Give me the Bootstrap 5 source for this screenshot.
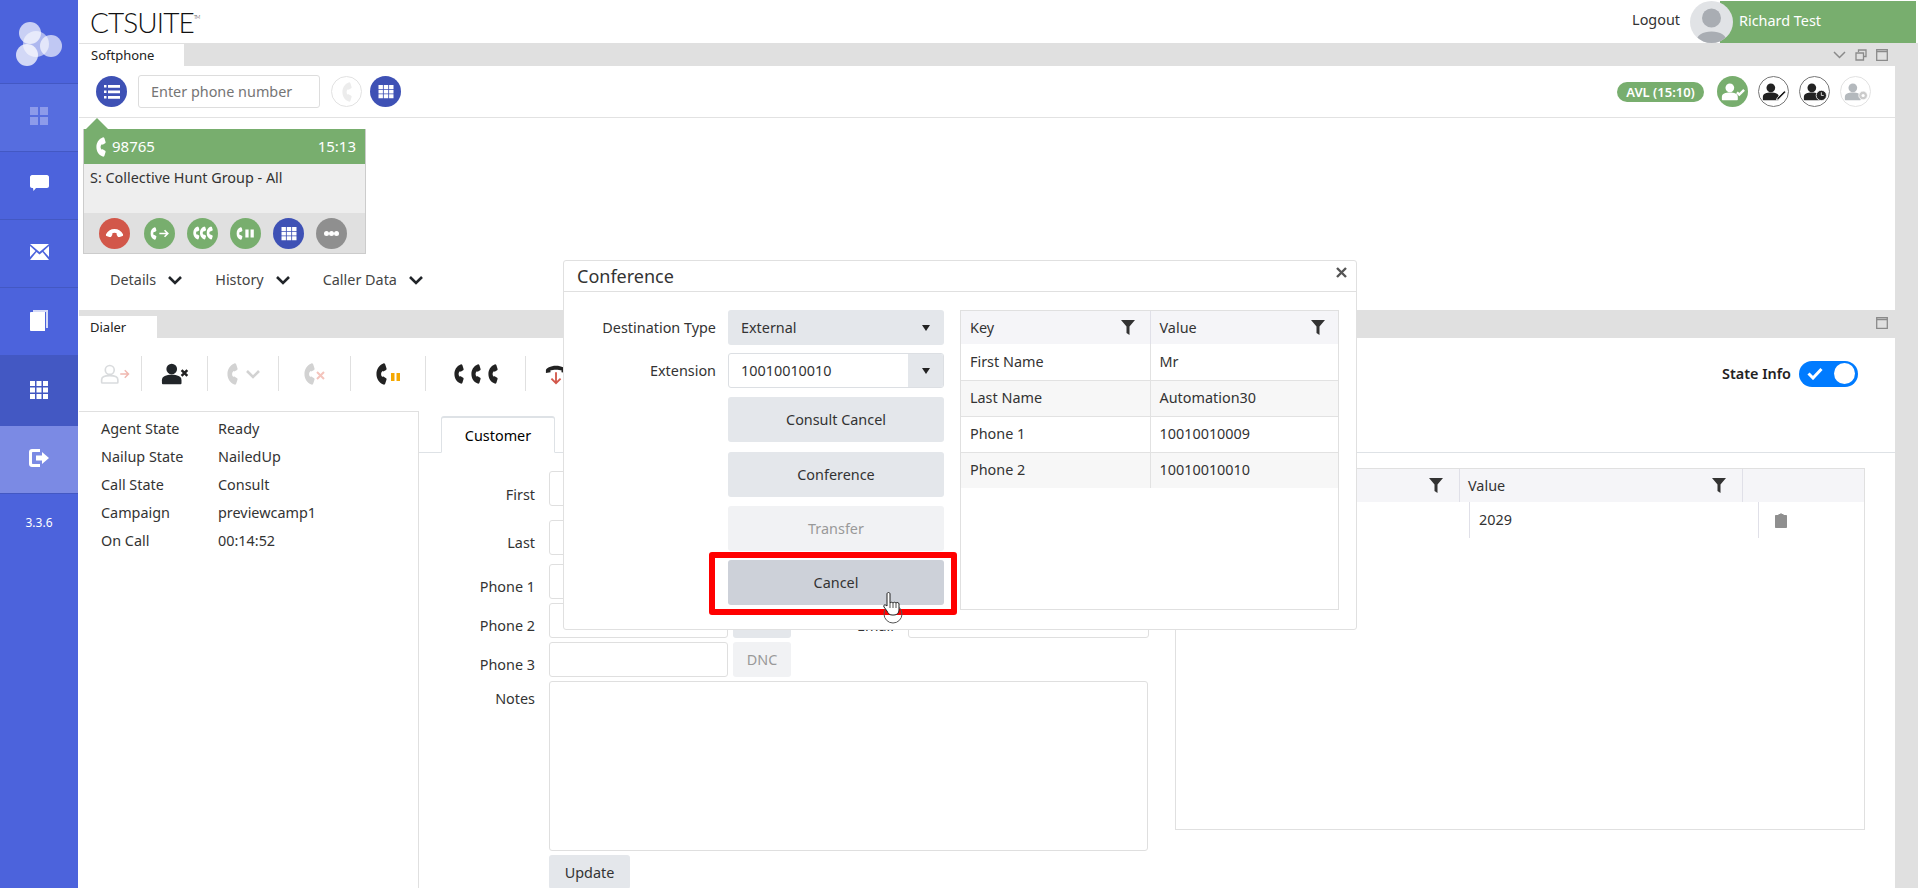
<!DOCTYPE html>
<html lang="en">
<head>
    <meta charset="UTF-8">
    <title>CTSUITE Softphone</title>
    <link href="https://cdn.jsdelivr.net/npm/bootstrap@5.3.0/dist/css/bootstrap.min.css" rel="stylesheet">
    <style>
        html, body { height: 888px; overflow: hidden; }
        body { font-family: "Noto Sans", sans-serif; font-size: 14.4px; color: #333; background: #fff; }

        /* left rail */
        .side-rail { width: 78px; height: 888px; background: #4c63dc; flex-shrink: 0; color: #fff; }
        .rail-logo { height: 84px; border-bottom: 1px solid #4358c3; padding-top: 5px; }
        .rail-item { height: 68px; border-bottom: 1px solid #4358c3; padding-bottom: 3px; }
        .rail-item.dim { background: #566ddf; }
        .rail-item.dark { background: #4358c3; height: 70px; border: 0; }
        .rail-item.light { background: #7b8ae4; height: 68px; }
        .rail-version { font-size: 12px; margin-top: 20px; }

        .app-main { width: 1840px; }
        .top-strip { height: 43px; }
        .brand-text { font-family: "Lato", sans-serif; font-weight: 300; font-size: 28px; color: #111; margin-left: 12px; letter-spacing: -.9px; line-height: 46px; }
        .brand-text sup { font-size: 5px; top: -14px; }
        .logout-link { color: #333; margin-right: 10px; margin-top: -4px; }
        .user-chip { width: 226px; height: 42px; margin-right: 2px; align-self: flex-start; }
        .user-photo { width: 43px; height: 42px; background: #e1e3e6; z-index: 1; }
        .user-name { background: #78ae6e; color: #fff; margin-left: -13px; padding-left: 19px; flex: 1; line-height: 40px; }

        /* window bars */
        .win-bar { background: #e0e0e0; margin-left: 1px; }
        .win-bar.soft { height: 23px; }
        .win-bar.dial { height: 28px; margin-top: 1px; }
        .win-tab { background: #fff; color: #222; font-size: 13px; padding-left: 12px; height: 22px; line-height: 22px; }
        .win-bar.soft .win-tab { width: 105px; margin-top: 1px; }
        .win-bar.dial .win-tab { width: 78px; height: 22px; margin-top: 6px; padding-left: 11px; }
        .win-ctrls { padding-right: 30px; gap: 9px; color: #8a8a8a; }
        .win-bar.dial .win-ctrls { padding-top: 7px; height: 28px; }

        .win-body { margin-right: 23px; margin-left: 1px; background: #fff; }
        .gutter { background: #e0e0e0; height: 845px; width: 23px; position: absolute; top: 43px; right: 0; }

        /* softphone */
        .soft-tools { height: 52px; border-bottom: 1px solid #e2e2e2; padding-left: 17px; padding-right: 24px; }
        .round-btn { width: 31px; height: 31px; flex-shrink: 0; }
        .round-btn.blue { background: #3e51b5; color: #fff; }
        .round-btn.green { background: #78ae6e; color: #fff; }
        .round-btn.red { background: #d2574a; color: #fff; }
        .round-btn.grey { background: #8f8f8f; color: #fff; }
        .round-btn.ghost { background: #fff; border: 1px solid #e2e2e2; color: #ececec; }
        .round-btn.ring { background: #fff; border: 1px solid #777; color: #222; }
        .status-btn { margin-left: 10px; }
        .phone-input.form-control { width: 182px; height: 33px; font-size: 14.4px; color: #666; border-color: #ddd; border-radius: 3px; padding: 0 12px; margin: 0 11px 0 11px; }
        .phone-input::placeholder { color: #757575; }
        .state-pill { background: #78ae6e; color: #fff; font-weight: 600; font-size: 13px; width: 87px; height: 20px; line-height: 20px; margin-right: 3px; }

        .call-zone { height: 191px; padding-left: 4px; }
        .call-tip { width: 0; height: 0; border-left: 11px solid transparent; border-right: 11px solid transparent; border-bottom: 11px solid #78ae6e; margin-left: 3px; }
        .call-card { width: 283px; border: 1px solid #ccc; border-width: 0 1px 1px; }
        .call-head { height: 35px; background: #78ae6e; color: #fff; font-size: 15px; padding: 0 9px 0 12px; gap: 6px; }
        .call-info { height: 49px; background: #eee; padding: 3px 6px; color: #333; }
        .call-actions { height: 40px; background: #e0e0e0; padding-left: 15px; }
        .call-actions .round-btn + .round-btn { margin-left: 12px; }
        .call-actions .red + .round-btn { margin-left: 14px; }
        .hang-turn { transform: rotate(90deg); }
        .drop-row { padding-left: 27px; padding-top: 15px; color: #444; }
        .drop-item { margin-right: 33px; }

        /* dialer */
        .dial-tools { height: 73px; padding-top: 18px; }
        .tool-cell { height: 35px; border-right: 1px solid #e0e0e0; }
        .cell-a { width: 63px; padding-right: 11px; }
        .cell-b { width: 66px; }
        .cell-c { width: 71px; color: #d2d2d2; }
        .cell-d { width: 72px; color: #d2d2d2; }
        .cell-e { width: 75px; color: #222; }
        .cell-f { width: 100px; color: #222; gap: 7px; }
        .cell-g { height: 35px; color: #222; padding-left: 19px; }
        .toggle-wrap { height: 35px; padding-right: 37px; }
        .state-toggle { width: 59px; height: 26px; background: #007bff; padding: 0 3px 0 8px; margin-left: 8px; }
        .toggle-dot { width: 21px; height: 21px; background: #fff; }
        .state-label { font-weight: 600; color: #222; font-size: 14.4px; }
        .dial-split { height: 477px; }
        .state-panel { width: 340px; border-top: 1px solid #e0e0e0; border-right: 1px solid #e0e0e0; padding: 3px 0 0 22px; }
        .state-panel .table { width: auto; margin: 0; --bs-table-bg: transparent; }
        .state-panel td { padding: 0; height: 28px; vertical-align: middle; border: 0; color: #333; }
        .state-panel td:first-child { width: 117px; }

        .tab-strip { padding-top: 5px; padding-left: 22px; border-bottom: 1px solid #dee2e6; height: 42px; }
        .tab-strip .nav-link { width: 114px; height: 37px; padding: 7px 0 0; text-align: center; color: #333; border: 1px solid #dee2e6; border-top: 2px solid #007bff; border-bottom-color: #fff; border-radius: 3px 3px 0 0; }
        .cust-form { width: 731px; padding-top: 18px; }
        .cust-row { display: flex; margin-bottom: 4px; }
        .cust-row.wide { margin-bottom: 14px; }
        .cust-row.mid { margin-bottom: 9px; }
        .cust-label { width: 116px; text-align: right; padding-top: 12px; color: #333; margin-right: 14px; }
        .cust-row.wide .cust-label { padding-top: 13px; }
        .cust-label.top-tight { padding-top: 7px; }
        .cust-input.form-control { width: 179px; height: 35px; border-color: #dfdfdf; border-radius: 3px; }
        .dnc-btn.btn { width: 58px; height: 35px; margin-left: 5px; padding: 0; font-size: 14.4px; background: #e4e7eb; border: 0; color: #333; border-radius: 3px; }
        .dnc-btn.btn:disabled { background: #f1f2f4; color: #999; opacity: 1; }
        .mail-label { width: 103px; text-align: right; margin-right: 14px; padding-top: 12px; }
        .mail-input.form-control { width: 241px; height: 35px; border-color: #dfdfdf; border-radius: 3px; }
        .notes-box.form-control { width: 599px; height: 170px; border-color: #dfdfdf; border-radius: 3px; resize: none; }
        .update-btn.btn { width: 81px; height: 34px; margin-left: 130px; padding: 2px 0 0; font-size: 14.4px; background: #e4e7eb; border: 0; color: #333; border-radius: 3px; }
        .data-box { width: 690px; height: 362px; border: 1px solid #e0e0e0; margin: 15px 0 0 25px; }
        .data-head { height: 33px; background: #f5f5f8; }
        .data-head > div { border-right: 1px solid #e0e0e8; padding: 0 8px; }
        .data-line { height: 36px; }
        .data-line > div { border-right: 1px solid #e0e0e8; padding-left: 9px; }
        .head-key { width: 284px; }
        .head-val { width: 283px; }
        .line-key { width: 294px; }
        .line-val { width: 289px; }

        /* conference dialog */
        .conf-dialog { position: absolute; left: 563px; top: 260px; width: 794px; height: 370px; background: #fff; border: 1px solid #e0e0e0; border-radius: 3px; z-index: 10; }
        .conf-title { height: 31px; border-bottom: 1px solid #e0e0e0; font-size: 18px; padding-left: 13px; color: #333; line-height: 31px; }
        .conf-close { width: 11px; height: 11px; color: #555; margin: 6px 9px 0 0; }
        .conf-left { width: 380px; padding-top: 18px; }
        .conf-field { height: 35px; margin-bottom: 8px; }
        .conf-field + .conf-field { margin-bottom: 9px; }
        .conf-label { width: 152px; text-align: right; margin-right: 12px; color: #333; }
        .conf-select { width: 216px; height: 35px; background: #e4e7eb; border-radius: 3px; padding-left: 13px; color: #333; }
        .conf-combo { width: 216px; height: 35px; border: 1px solid #dcdfe3; border-radius: 3px; overflow: hidden; }
        .combo-arrow { width: 35px; background: #e4e7eb; }
        .caret-down { width: 0; height: 0; border-left: 4.5px solid transparent; border-right: 4.5px solid transparent; border-top: 6px solid #222; }
        .conf-select .caret-down { margin-right: 14px; }
        .conf-btn.btn { display: block; width: 216px; height: 45px; margin: 0 0 9px 164px; padding: 0; font-size: 14.4px; border: 0; border-radius: 3px; background: #e4e7eb; color: #333; }
        .conf-btn.btn.first-btn { margin-bottom: 10px; }
        .conf-btn.btn:disabled { background: #f1f2f4; color: #999; opacity: 1; }
        .conf-btn.btn.picked { background: #cdd1d9; }
        .conf-table { width: 379px; height: 300px; border: 1px solid #e0e0e0; margin: 18px 0 0 16px; }
        .conf-table .table { margin: 0; --bs-table-bg: transparent; table-layout: fixed; }
        .conf-table th { height: 33px; font-weight: 400; background: #f5f5f8; padding: 0 9px; vertical-align: middle; border: 0; border-right: 1px solid #e0e0e8; color: #333; }
        .conf-table th:first-child { width: 189px; padding-right: 11px; }
        .conf-table td { height: 36px; padding: 0 9px; vertical-align: middle; border: 0; border-right: 1px solid #e2e2e2; border-bottom: 1px solid #e2e2e2; color: #333; box-shadow: none; }
        .conf-table tbody tr:nth-child(even) td { background: #f7f7f7; }
        .conf-table tr:last-child td { border-bottom: 0; }
        .conf-table th:last-child, .conf-table td:last-child { border-right: 0; }

        .red-mark { position: absolute; left: 709px; top: 552px; width: 248px; height: 63px; border: 6px solid #f00; border-radius: 3px; z-index: 11; }
        .hand-cursor { position: absolute; left: 881px; top: 591px; z-index: 12; }
    </style>
</head>
<body class="d-flex">

<svg class="d-none">
    <symbol id="i-phone" viewBox="0 0 12 24"><path fill="currentColor" d="M8 .5C3 2.500.5 7 .5 12S3 21.500 8 23.500c1 .3 1.500 0 2-.8l1.500-4.700c.2-.7 0-1.200-.5-1.500L8.500 15c-.6-.3-1.100-.2-1.500.3-2-1.800-2-4.800 0-6.600.4.500.9.600 1.500.3L11 7.500c.5-.3.700-.8.500-1.500L10 1.300C9.500.5 9 .2 8 .5z"/></symbol>
    <symbol id="i-grid" viewBox="0 0 16 16"><path fill="currentColor" d="M0 1h4.700v4.300H0zM5.600 1h4.800v4.300H5.600zM11.300 1H16v4.300h-4.700zM0 6h4.700v4.200H0zM5.600 6h4.800v4.200H5.600zM11.300 6H16v4.200h-4.700zM0 11h4.700v4.200H0zM5.600 11h4.800v4.200H5.600zM11.300 11H16v4.200h-4.700z"/></symbol>
    <symbol id="i-list" viewBox="0 0 16 14"><path fill="currentColor" d="M0 0h2.500v2.500H0zM4 0h12v2.800H4zM0 5.500h2.500V8H0zM4 5.500h12v2.800H4zM0 11h2.500v2.500H0zM4 11h12v2.800H4z"/></symbol>
    <symbol id="i-user" viewBox="0 0 24 24"><circle cx="12" cy="7" r="6" fill="currentColor"/><path fill="currentColor" d="M1 23v-3.500C1 15 6 13.500 12 13.500S23 15 23 19.500V23c0 .6-.4 1-1 1H2c-.6 0-1-.4-1-1z"/></symbol>
    <symbol id="i-user-line" viewBox="0 0 24 24"><circle cx="12" cy="7" r="5.500" fill="none" stroke="currentColor" stroke-width="2"/><path fill="none" stroke="currentColor" stroke-width="2" d="M2 22v-3c0-3.500 4.500-5 10-5s10 1.500 10 5v3c0 .6-.4 1-1 1H3c-.6 0-1-.4-1-1z"/></symbol>
    <symbol id="i-filter" viewBox="0 0 14 15"><path fill="#333" d="M0 0h14L8.500 6.500V15L5.500 13V6.500z"/></symbol>
    <symbol id="i-chev" viewBox="0 0 14 10"><path fill="none" stroke="currentColor" stroke-width="2.600" d="M1 2l6 6 6-6"/></symbol>
</svg>

<aside class="side-rail d-flex flex-column align-items-center">
    <div class="rail-logo w-100 d-flex align-items-center justify-content-center">
        <svg width="48" height="48" viewBox="0 0 48 48" fill="#fff"><circle cx="15" cy="13" r="11" opacity=".7"/><circle cx="21" cy="24" r="13" opacity=".55"/><circle cx="36" cy="26" r="11" opacity=".65"/><circle cx="12" cy="35" r="11" opacity=".75"/></svg>
    </div>
    <div class="rail-item dim w-100 d-flex align-items-center justify-content-center">
        <svg width="18" height="18" viewBox="0 0 18 18" fill="#8d9bea"><path d="M0 0h8v8H0zM10 0h8v8h-8zM0 10h8v8H0zM10 10h8v8h-8z"/></svg>
    </div>
    <div class="rail-item w-100 d-flex align-items-center justify-content-center">
        <svg width="19" height="18" viewBox="0 0 19 18" fill="#fff"><path d="M2 0h15c1 0 2 1 2 2v9c0 1-1 2-2 2H6l-2.500 3-.5-3H2c-1 0-2-1-2-2V2c0-1 1-2 2-2z"/></svg>
    </div>
    <div class="rail-item w-100 d-flex align-items-center justify-content-center">
        <svg width="19" height="16" viewBox="0 0 19 16" fill="#fff"><path d="M0 0h19L9.500 8zM0 2l5.500 5L0 13zM19 2l-5.500 5 5.500 6zM6.500 8l3 2.500 3-2.500 6.500 8H0z"/></svg>
    </div>
    <div class="rail-item w-100 d-flex align-items-center justify-content-center">
        <svg width="18" height="21" viewBox="0 0 18 21"><path fill="#d5daf7" d="M3 0h15v18h-2V2H3z"/><path fill="#fff" d="M1 2h14v19H1c-.5 0-1-.5-1-1V3c0-.5.500-1 1-1z"/></svg>
    </div>
    <div class="rail-item dark w-100 d-flex align-items-center justify-content-center">
        <svg width="18" height="18" viewBox="0 0 18 18" fill="#fff"><path d="M0 0h5v5H0zM6.500 0h5v5h-5zM13 0h5v5h-5zM0 6.500h5v5H0zM6.500 6.500h5v5h-5zM13 6.500h5v5h-5zM0 13h5v5H0zM6.500 13h5v5h-5zM13 13h5v5h-5z"/></svg>
    </div>
    <div class="rail-item light w-100 d-flex align-items-center justify-content-center">
        <svg width="20" height="18" viewBox="0 0 20 18" fill="#fff"><path d="M3 0h8v3H4c-.6 0-1 .4-1 1v10c0 .6.400 1 1 1h7v3H3c-1.700 0-3-1.300-3-3V3c0-1.700 1.300-3 3-3z"/><path d="M7 6.500h6V3l7 6-7 6v-3.500H7z"/></svg>
    </div>
    <div class="rail-version">3.3.6</div>
</aside>

<div class="app-main d-flex flex-column">
    <header class="top-strip d-flex align-items-center justify-content-between">
        <div class="brand-text">CTSUITE<sup>TM</sup></div>
        <div class="d-flex align-items-center">
            <span class="logout-link">Logout</span>
            <div class="user-chip d-flex">
                <div class="user-photo rounded-circle overflow-hidden">
                    <svg width="43" height="42" viewBox="0 0 43 42" fill="#a9adb3"><circle cx="21.500" cy="17" r="9.500"/><path d="M6 42c0-8 7-11.500 15.500-11.500S37 34 37 42z"/></svg>
                </div>
                <div class="user-name">Richard Test</div>
            </div>
        </div>
    </header>

    <div class="win-bar soft d-flex justify-content-between">
        <div class="win-tab">Softphone</div>
        <div class="win-ctrls d-flex align-items-center">
            <svg width="13" height="8" viewBox="0 0 13 8"><path fill="none" stroke="currentColor" stroke-width="1.500" d="M1 1l5.500 5.500L12 1"/></svg>
            <svg width="12" height="12" viewBox="0 0 12 12"><path fill="none" stroke="currentColor" stroke-width="1.300" d="M3.500 3V1h7.500v6.500H8.500M1 4h7.500v7H1z"/></svg>
            <svg width="12" height="12" viewBox="0 0 12 12"><path fill="none" stroke="currentColor" stroke-width="1.300" d="M.7.700h10.600v10.600H.7zM.7 2.500h10.600"/></svg>
        </div>
    </div>
    <div class="win-body">
        <div class="soft-tools d-flex align-items-center">
            <div class="round-btn blue rounded-circle d-flex align-items-center justify-content-center">
                <svg width="16" height="14"><use href="#i-list"/></svg>
            </div>
            <input type="text" class="phone-input form-control" placeholder="Enter phone number">
            <div class="round-btn ghost rounded-circle d-flex align-items-center justify-content-center">
                <svg width="10" height="20"><use href="#i-phone"/></svg>
            </div>
            <div class="round-btn blue rounded-circle d-flex align-items-center justify-content-center ms-2">
                <svg width="16" height="15"><use href="#i-grid"/></svg>
            </div>
            <div class="ms-auto d-flex align-items-center">
                <div class="state-pill rounded-pill text-center">AVL (15:10)</div>
                <div class="round-btn green status-btn rounded-circle d-flex align-items-center justify-content-center">
                    <svg width="24" height="19" viewBox="0 0 30 24"><use href="#i-user" width="22" height="24"/><path fill="none" stroke="currentColor" stroke-width="3" d="M20 13l3 3 6-6"/></svg>
                </div>
                <div class="round-btn ring status-btn rounded-circle d-flex align-items-center justify-content-center">
                    <svg width="24" height="19" viewBox="0 0 30 24"><use href="#i-user" width="22" height="24"/><path fill="#222" stroke="#fff" d="M19 20l9-9 2 2-9 9-3 1z"/></svg>
                </div>
                <div class="round-btn ring status-btn rounded-circle d-flex align-items-center justify-content-center">
                    <svg width="24" height="19" viewBox="0 0 30 24"><use href="#i-user" width="22" height="24"/><circle cx="23" cy="17" r="6.500" fill="#222" stroke="#fff"/><path fill="none" stroke="#fff" d="M23 13v4h3"/></svg>
                </div>
                <div class="round-btn ghost status-btn rounded-circle d-flex align-items-center justify-content-center">
                    <svg width="24" height="19" viewBox="0 0 30 24" class="text-secondary opacity-50"><use href="#i-user" width="22" height="24"/><circle cx="24" cy="17" r="5.500" fill="#999" stroke="#fff"/><circle cx="24" cy="17" r="2" fill="#fff"/></svg>
                </div>
            </div>
        </div>
        <div class="call-zone">
            <div class="call-tip"></div>
            <div class="call-card">
                <div class="call-head d-flex align-items-center">
                    <svg width="10" height="20"><use href="#i-phone"/></svg>
                    <span>98765</span>
                    <span class="ms-auto">15:13</span>
                </div>
                <div class="call-info">S: Collective Hunt Group - All</div>
                <div class="call-actions d-flex align-items-center">
                    <div class="round-btn red rounded-circle d-flex align-items-center justify-content-center">
                        <svg width="9" height="18" class="hang-turn"><use href="#i-phone"/></svg>
                    </div>
                    <div class="round-btn green rounded-circle d-flex align-items-center justify-content-center">
                        <svg width="20" height="13" viewBox="0 0 30 20"><use href="#i-phone" width="10" height="20"/><path fill="none" stroke="currentColor" stroke-width="2.500" d="M14 10h13M22 5l5 5-5 5"/></svg>
                    </div>
                    <div class="round-btn green rounded-circle d-flex align-items-center justify-content-center">
                        <svg width="20" height="14" viewBox="0 0 30 20"><use href="#i-phone" width="10" height="20"/><use href="#i-phone" x="10" width="10" height="20"/><use href="#i-phone" x="20" width="10" height="20"/></svg>
                    </div>
                    <div class="round-btn green rounded-circle d-flex align-items-center justify-content-center">
                        <svg width="20" height="13" viewBox="0 0 30 20"><use href="#i-phone" width="10" height="20"/><path fill="currentColor" d="M14 4h5v12h-5zM22 4h5v12h-5z"/></svg>
                    </div>
                    <div class="round-btn blue rounded-circle d-flex align-items-center justify-content-center">
                        <svg width="16" height="15"><use href="#i-grid"/></svg>
                    </div>
                    <div class="round-btn grey rounded-circle d-flex align-items-center justify-content-center">
                        <svg width="15" height="5" viewBox="0 0 15 5" fill="currentColor"><circle cx="2.500" cy="2.500" r="2.500"/><circle cx="7.500" cy="2.500" r="2.500"/><circle cx="12.500" cy="2.500" r="2.500"/></svg>
                    </div>
                </div>
            </div>
            <div class="drop-row d-flex">
                <div class="drop-item d-flex align-items-center gap-2">Details <svg width="14" height="10" class="ms-1 text-dark"><use href="#i-chev"/></svg></div>
                <div class="drop-item d-flex align-items-center gap-2">History <svg width="14" height="10" class="ms-1 text-dark"><use href="#i-chev"/></svg></div>
                <div class="drop-item d-flex align-items-center gap-2">Caller Data <svg width="14" height="10" class="ms-1 text-dark"><use href="#i-chev"/></svg></div>
            </div>
        </div>
    </div>

    <div class="win-bar dial d-flex justify-content-between">
        <div class="win-tab">Dialer</div>
        <div class="win-ctrls d-flex">
            <svg width="12" height="12" viewBox="0 0 12 12"><path fill="none" stroke="currentColor" stroke-width="1.300" d="M.7.700h10.600v10.600H.7zM.7 2.500h10.600"/></svg>
        </div>
    </div>
    <div class="win-body">
        <div class="dial-tools d-flex">
            <div class="tool-cell cell-a d-flex align-items-center justify-content-end">
                <svg width="30" height="22" viewBox="0 0 40 28"><g class="text-secondary opacity-25"><use href="#i-user-line" width="26" height="28"/></g><path fill="none" stroke="#f0b8b0" stroke-width="2" d="M27 14h11M33 9l5 5-5 5"/></svg>
            </div>
            <div class="tool-cell cell-b d-flex align-items-center justify-content-center">
                <svg width="28" height="23" viewBox="0 0 34 28" class="text-dark"><use href="#i-user" width="26" height="28"/><path fill="none" stroke="#222" stroke-width="3" d="M25 10l7 7M32 10l-7 7"/></svg>
            </div>
            <div class="tool-cell cell-c d-flex align-items-center justify-content-center gap-2">
                <svg width="11" height="22"><use href="#i-phone"/></svg>
                <svg width="14" height="10"><use href="#i-chev"/></svg>
            </div>
            <div class="tool-cell cell-d d-flex align-items-center justify-content-center">
                <svg width="22" height="22" viewBox="0 0 22 22"><use href="#i-phone" width="11" height="22"/><path fill="none" stroke="#f4c4bc" stroke-width="2" d="M13 9l7 7M20 9l-7 7"/></svg>
            </div>
            <div class="tool-cell cell-e d-flex align-items-center justify-content-center">
                <svg width="25" height="22" viewBox="0 0 25 22"><use href="#i-phone" width="11" height="22"/><path fill="#f5a800" d="M15 10h3.500v8H15zM20.500 10H24v8h-3.500z"/></svg>
            </div>
            <div class="tool-cell cell-f d-flex align-items-center justify-content-center">
                <svg width="10" height="22"><use href="#i-phone"/></svg>
                <svg width="10" height="22"><use href="#i-phone"/></svg>
                <svg width="10" height="22"><use href="#i-phone"/></svg>
            </div>
            <div class="cell-g d-flex align-items-center">
                <svg width="22" height="24" viewBox="0 0 24 26"><path fill="currentColor" d="M1 9c0-2 5-5 11-5s11 3 11 5v3l-5-1V9c-3-1-9-1-12 0v2l-5 1z"/><path fill="none" stroke="#d2574a" stroke-width="2" d="M12 11v12M7 18l5 5 5-5"/></svg>
            </div>
            <div class="toggle-wrap ms-auto d-flex align-items-center">
                <span class="state-label">State Info</span>
                <div class="state-toggle rounded-pill d-flex align-items-center justify-content-between">
                    <svg width="16" height="13" viewBox="0 0 16 13"><path fill="none" stroke="#fff" stroke-width="3" d="M1.500 6.500l4.500 4.500 8.500-9"/></svg>
                    <div class="toggle-dot rounded-circle"></div>
                </div>
            </div>
        </div>
        <div class="dial-split d-flex">
            <div class="state-panel">
                <table class="table table-borderless">
                    <tr><td>Agent State</td><td>Ready</td></tr>
                    <tr><td>Nailup State</td><td>NailedUp</td></tr>
                    <tr><td>Call State</td><td>Consult</td></tr>
                    <tr><td>Campaign</td><td>previewcamp1</td></tr>
                    <tr><td>On Call</td><td>00:14:52</td></tr>
                </table>
            </div>
            <div class="flex-grow-1">
                <ul class="nav nav-tabs tab-strip">
                    <li class="nav-item"><a class="nav-link active" href="#">Customer</a></li>
                </ul>
                <div class="d-flex">
                    <form class="cust-form">
                        <div class="cust-row wide"><div class="cust-label">First</div><input class="cust-input form-control"></div>
                        <div class="cust-row mid"><div class="cust-label">Last</div><input class="cust-input form-control"></div>
                        <div class="cust-row"><div class="cust-label">Phone 1</div><input class="cust-input form-control"><button type="button" class="dnc-btn btn" disabled>DNC</button></div>
                        <div class="cust-row"><div class="cust-label">Phone 2</div><input class="cust-input form-control"><button type="button" class="dnc-btn btn">DNC</button><div class="mail-label">Email</div><input class="mail-input form-control"></div>
                        <div class="cust-row"><div class="cust-label">Phone 3</div><input class="cust-input form-control"><button type="button" class="dnc-btn btn" disabled>DNC</button></div>
                        <div class="cust-row"><div class="cust-label top-tight">Notes</div><textarea class="notes-box form-control"></textarea></div>
                        <button type="button" class="update-btn btn">Update</button>
                    </form>
                    <div class="data-box">
                        <div class="data-head d-flex">
                            <div class="head-key d-flex align-items-center justify-content-end"><svg width="14" height="15" class="me-2"><use href="#i-filter"/></svg></div>
                            <div class="head-val d-flex align-items-center justify-content-between"><span>Value</span><svg width="14" height="15" class="me-2"><use href="#i-filter"/></svg></div>
                        </div>
                        <div class="data-line d-flex">
                            <div class="line-key d-flex align-items-center"></div>
                            <div class="line-val d-flex align-items-center">2029</div>
                            <div class="d-flex align-items-center ps-3 border-0">
                                <svg width="12" height="15" viewBox="0 0 12 15" fill="#8f8f8f"><path d="M1 2h2.500V1h1.500l1-1 1 1h1.500v1H11c.6 0 1 .4 1 1v11c0 .6-.4 1-1 1H1c-.6 0-1-.4-1-1V3c0-.6.400-1 1-1z"/></svg>
                            </div>
                        </div>
                    </div>
                </div>
            </div>
        </div>
    </div>
</div>

<div class="gutter"></div>

<!-- Conference dialog -->
<div class="conf-dialog">
    <div class="conf-title d-flex justify-content-between">
        <span>Conference</span>
        <svg class="conf-close" viewBox="0 0 11 11"><path fill="none" stroke="currentColor" stroke-width="2.400" d="M1 1l9 9M10 1l-9 9"/></svg>
    </div>
    <div class="d-flex">
        <div class="conf-left">
            <div class="conf-field d-flex align-items-center">
                <div class="conf-label">Destination Type</div>
                <div class="conf-select d-flex align-items-center justify-content-between">External <span class="caret-down"></span></div>
            </div>
            <div class="conf-field d-flex align-items-center">
                <div class="conf-label">Extension</div>
                <div class="conf-combo d-flex">
                    <div class="flex-grow-1 d-flex align-items-center ps-2 ms-1">10010010010</div>
                    <div class="combo-arrow d-flex align-items-center justify-content-center"><span class="caret-down"></span></div>
                </div>
            </div>
            <button type="button" class="conf-btn first-btn btn">Consult Cancel</button>
            <button type="button" class="conf-btn btn">Conference</button>
            <button type="button" class="conf-btn btn" disabled>Transfer</button>
            <button type="button" class="conf-btn btn picked">Cancel</button>
        </div>
        <div class="conf-table">
            <table class="table">
                <thead>
                    <tr>
                        <th><div class="d-flex justify-content-between align-items-center">Key <svg width="14" height="15" class="me-1"><use href="#i-filter"/></svg></div></th>
                        <th><div class="d-flex justify-content-between align-items-center">Value <svg width="14" height="15" class="me-1"><use href="#i-filter"/></svg></div></th>
                    </tr>
                </thead>
                <tbody>
                    <tr><td>First Name</td><td>Mr</td></tr>
                    <tr><td>Last Name</td><td>Automation30</td></tr>
                    <tr><td>Phone 1</td><td>10010010009</td></tr>
                    <tr><td>Phone 2</td><td>10010010010</td></tr>
                </tbody>
            </table>
        </div>
    </div>
</div>

<div class="red-mark"></div>
<svg class="hand-cursor" width="26" height="34" viewBox="0 0 26 34">
    <circle cx="12" cy="23" r="9" fill="none" stroke="#555" stroke-width="1"/>
    <path fill="#fff" stroke="#222" stroke-width="1" d="M6 3c0-2 3-2 3 0v9c1-1 2-1 3 0 1-1 2-1 3 0 1-1 3-.5 3 1v6c0 3-2 5-5 5h-2c-3 0-4-2-5-4l-3-4c-1-2 1-3 3-1z"/>
    <path fill="none" stroke="#222" stroke-width=".8" d="M9 12v5M12 12v5M15 12v5"/>
</svg>

<script src="https://cdn.jsdelivr.net/npm/bootstrap@5.3.0/dist/js/bootstrap.bundle.min.js"></script>
</body>
</html>
